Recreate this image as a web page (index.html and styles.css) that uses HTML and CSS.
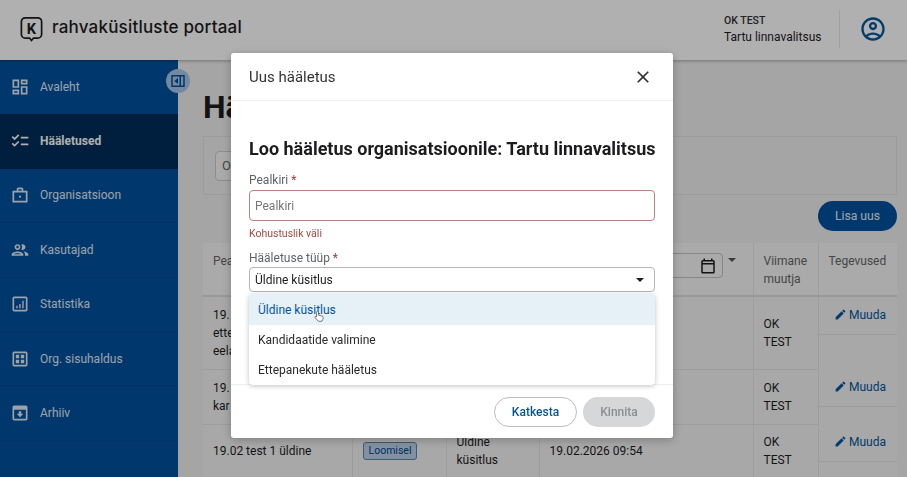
FILE: index.html
```html
<!DOCTYPE html>
<html lang="et">
<head>
<meta charset="utf-8">
<title>Rahvaküsitluste portaal</title>
<link rel="stylesheet" href="styles.css">
</head>
<body>
<div class="app">
  <header class="topbar">
    <div class="brand">
      <svg class="logo" viewBox="0 0 24 24" width="27" height="27"><path class="logo-line" d="M6.5 2.5h11a3.5 3.5 0 0 1 3.5 3.5v11a3.5 3.5 0 0 1-3.5 3.500h-3.700L12 22.700l-1.800-2.200H6.500a3.500 3.500 0 0 1-3.500-3.500V6a3.500 3.500 0 0 1 3.500-3.500z"/><text class="logo-k" x="12" y="16.700" text-anchor="middle">K</text></svg>
      <span class="brand-name">rahvaküsitluste portaal</span>
    </div>
    <div class="account">
      <div class="account-text"><div class="account-name">OK TEST</div><div class="account-org">Tartu linnavalitsus</div></div>
      <div class="account-icon"><svg viewBox="0 0 24 24" width="28" height="28"><path d="M12 2C6.480 2 2 6.480 2 12s4.480 10 10 10 10-4.480 10-10S17.520 2 12 2zM7.350 18.500C8.660 17.560 10.260 17 12 17s3.340.56 4.650 1.500C15.340 19.440 13.740 20 12 20s-3.340-.56-4.650-1.500zm10.790-1.380C16.450 15.800 14.320 15 12 15s-4.450.8-6.140 2.120C4.700 15.730 4 13.950 4 12c0-4.420 3.580-8 8-8s8 3.580 8 8c0 1.950-.7 3.730-1.860 5.120z"/><path d="M12 6c-1.930 0-3.500 1.570-3.500 3.500S10.070 13 12 13s3.500-1.570 3.500-3.500S13.930 6 12 6zm0 5c-.83 0-1.500-.67-1.500-1.500S11.170 8 12 8s1.500.67 1.500 1.500S12.830 11 12 11z"/></svg></div>
    </div>
  </header>
  <div class="shell">
    <nav class="sidebar">
      <button class="collapse" type="button"><svg viewBox="0 0 24 24" width="18" height="18"><path d="M3 4h18v16H3zm2 2v12h9V6zm11 0v12h3V6z" fill-rule="evenodd"/><path d="M12 8v8l-5-4z"/></svg></button>
      <a class="nav-item"><svg viewBox="0 0 24 24"><path d="M19 5v2h-4V5h4M9 5v6H5V5h4m10 8v6h-4v-6h4M9 17v2H5v-2h4M21 3h-8v6h8V3zM11 3H3v10h8V3zm10 8h-8v10h8V11zm-10 4H3v6h8v-6z"/></svg>Avaleht</a>
      <a class="nav-item active"><svg viewBox="0 0 24 24"><path d="M22 7h-9v2h9V7zm0 8h-9v2h9v-2zM5.540 11 2 7.460l1.410-1.410 2.120 2.120 4.240-4.240 1.410 1.410L5.540 11zm0 8L2 15.460l1.410-1.410 2.120 2.120 4.240-4.240 1.410 1.410L5.540 19z"/></svg>Hääletused</a>
      <a class="nav-item"><svg viewBox="0 0 24 24"><path fill-rule="evenodd" d="M3 7h5V4.500L9.500 3h5L16 4.500V7h5v14H3zm7-2v2h4V5zM5 9v10h14V9z"/><circle cx="12" cy="14" r="1.300"/></svg>Organisatsioon</a>
      <a class="nav-item wide-icon"><svg viewBox="0 0 24 24"><path d="M9 13.750c-2.340 0-7 1.170-7 3.500V19h14v-1.750c0-2.330-4.660-3.500-7-3.500zM4.340 17c.84-.58 2.870-1.250 4.660-1.250s3.820.67 4.660 1.250H4.340zM9 12c1.930 0 3.500-1.570 3.500-3.500S10.930 5 9 5 5.500 6.570 5.500 8.500 7.070 12 9 12zm0-5c.83 0 1.500.67 1.500 1.500S9.830 10 9 10s-1.500-.67-1.500-1.500S8.170 7 9 7zm7.040 6.810c1.160.84 1.960 1.960 1.960 3.440V19h4v-1.750c0-2.020-3.500-3.170-5.960-3.440zM15 12c1.930 0 3.500-1.570 3.500-3.500S16.930 5 15 5c-.54 0-1.040.13-1.500.35.63.89 1 1.980 1 3.150s-.37 2.260-1 3.150c.46.22.96.35 1.500.35z"/></svg>Kasutajad</a>
      <a class="nav-item"><svg viewBox="0 0 24 24"><path d="M19 3H5c-1.100 0-2 .9-2 2v14c0 1.100.9 2 2 2h14c1.100 0 2-.9 2-2V5c0-1.100-.9-2-2-2zm0 16H5V5h14v14z"/><path d="M7.500 14h1.700v3H7.500zm3.600-2h1.700v5h-1.700zm3.600-4h1.700v9h-1.700z"/></svg>Statistika</a>
      <a class="nav-item"><svg viewBox="0 0 24 24"><path d="M19 3H5c-1.100 0-2 .9-2 2v14c0 1.100.9 2 2 2h14c1.100 0 2-.9 2-2V5c0-1.100-.9-2-2-2zm0 16H5V5h14v14z"/><path d="M7 7h4v4H7zm6 0h4v4h-4zm-6 6h4v4H7zm6 0h4v4h-4z"/></svg>Org. sisuhaldus</a>
      <a class="nav-item"><svg viewBox="0 0 24 24"><path fill-rule="evenodd" d="M5 3h14a2 2 0 0 1 2 2v14a2 2 0 0 1-2 2H5a2 2 0 0 1-2-2V5a2 2 0 0 1 2-2zm0 5v11h14V8z"/><path d="M10.500 10h3v3H16l-4 4-4-4h2.500z"/></svg>Arhiiv</a>
    </nav>
    <main class="content">
      <h1 class="page-title">Hääletused</h1>
      <section class="filters"><div class="filter-input">O</div></section>
      <div class="toolbar"><button class="btn-primary" type="button">Lisa uus</button></div>
      <table class="grid">
        <colgroup><col class="c1"><col class="c2"><col class="c3"><col class="c4"><col class="c5"><col class="c6"></colgroup>
        <thead>
          <tr>
            <th>Pea</th><th></th><th></th>
            <th><div class="date-filter"><div class="date-input"><svg viewBox="0 0 24 24" width="18" height="18"><path d="M19 4h-1V2h-2v2H8V2H6v2H5a2 2 0 0 0-2 2v14a2 2 0 0 0 2 2h14a2 2 0 0 0 2-2V6a2 2 0 0 0-2-2zm0 16H5V10h14zM5 8V6h14v2z"/></svg></div><span class="caret"></span></div></th>
            <th>Viimane muutja</th><th>Tegevused</th>
          </tr>
        </thead>
        <tbody>
          <tr class="r1">
            <td>19.<br>ette<br>eela</td><td></td><td></td><td></td><td>OK TEST</td>
            <td class="actions"><a class="edit"><svg viewBox="0 0 24 24" width="13" height="13"><path d="M3 17.250V21h3.750L17.810 9.940l-3.750-3.750L3 17.250zM20.710 7.040a1 1 0 0 0 0-1.410l-2.340-2.340a1 1 0 0 0-1.410 0l-1.830 1.830 3.750 3.750 1.830-1.830z"/></svg>Muuda</a></td>
          </tr>
          <tr class="r2">
            <td>19.<br>kar</td><td></td><td></td><td></td><td>OK TEST</td>
            <td class="actions"><a class="edit"><svg viewBox="0 0 24 24" width="13" height="13"><path d="M3 17.250V21h3.750L17.810 9.940l-3.750-3.750L3 17.250zM20.710 7.040a1 1 0 0 0 0-1.410l-2.340-2.340a1 1 0 0 0-1.410 0l-1.830 1.830 3.750 3.750 1.830-1.830z"/></svg>Muuda</a></td>
          </tr>
          <tr class="r3">
            <td>19.02 test 1 üldine</td><td><span class="badge">Loomisel</span></td><td>Üldine küsitlus</td><td>19.02.2026 09:54</td><td>OK TEST</td>
            <td class="actions"><a class="edit"><svg viewBox="0 0 24 24" width="13" height="13"><path d="M3 17.250V21h3.750L17.810 9.940l-3.750-3.750L3 17.250zM20.710 7.040a1 1 0 0 0 0-1.410l-2.340-2.340a1 1 0 0 0-1.410 0l-1.830 1.830 3.750 3.750 1.830-1.830z"/></svg>Muuda</a></td>
          </tr>
        </tbody>
      </table>
    </main>
  </div>
</div>
<div class="backdrop"></div>
<div class="modal" role="dialog">
  <div class="modal-head">
    <span class="modal-title">Uus hääletus</span>
    <svg class="modal-close" viewBox="0 0 24 24" width="20" height="20"><path d="M19 6.410 17.590 5 12 10.590 6.410 5 5 6.410 10.590 12 5 17.590 6.410 19 12 13.410 17.590 19 19 17.590 13.410 12z"/></svg>
  </div>
  <div class="modal-body">
    <h2 class="modal-heading">Loo hääletus organisatsioonile: Tartu linnavalitsus</h2>
    <div class="field">
      <div class="field-label">Pealkiri <span class="req">*</span></div>
      <div class="text-input invalid">Pealkiri</div>
      <div class="field-error">Kohustuslik väli</div>
    </div>
    <div class="field field-select">
      <div class="field-label">Hääletuse tüüp <span class="req">*</span></div>
      <div class="select-box">Üldine küsitlus<span class="caret dark"></span></div>
      <ul class="menu">
        <li class="menu-item hover">Üldine küsitlus<svg class="pointer" viewBox="0 0 14 16" width="11" height="13"><path d="M4.500 1.200c.7 0 1.200.5 1.200 1.200v4l4.500 1c1 .2 1.500.9 1.500 1.800 0 1.700-.6 3.300-1.500 4.800H5.500L1.500 9.500c-.4-.5-.3-1.100.1-1.400.5-.3 1-.2 1.400.2l.3.3V2.400c0-.7.5-1.200 1.200-1.200z"/></svg></li>
        <li class="menu-item">Kandidaatide valimine</li>
        <li class="menu-item">Ettepanekute hääletus</li>
      </ul>
    </div>
  </div>
  <div class="modal-foot">
    <button class="btn-outline" type="button">Katkesta</button>
    <button class="btn-disabled" type="button" disabled>Kinnita</button>
  </div>
</div>
</body>
</html>
```
FILE: styles.css
```css
* { box-sizing: border-box; }
html, body { margin: 0; height: 100%; overflow: hidden; }
body { font-family: Roboto, "Liberation Sans", sans-serif; font-size: 12px; color: #1c1c1e; background: #efefef; }
.app { display: flex; flex-direction: column; height: 477px; overflow: hidden; }
.topbar { flex: 0 0 60px; display: flex; justify-content: space-between; align-items: center; background: #fff; padding: 0 15px 0 18px; box-shadow: 0 1px 3px rgba(0,0,0,.3); position: relative; z-index: 2; }
.brand { display: flex; align-items: center; gap: 7px; }
.logo { display: block; margin-bottom: 4px; }
.logo-line { fill: none; stroke: #1c1c1e; stroke-width: 1.500; }
.logo-k { font: 700 13px Roboto, sans-serif; fill: #1c1c1e; }
.brand-name { font-family: Inter, sans-serif; font-size: 17px; font-weight: 500; letter-spacing: .2px; color: #1c1c1e; margin-bottom: 7px; }
.account { display: flex; align-items: center; margin-bottom: 3px; }
.account-text { width: 115px; }
.account-name { font-size: 10.500px; font-weight: 500; line-height: 17px; color: #333; }
.account-org { font-size: 12px; line-height: 17px; color: #1c1c1e; }
.account-icon { height: 38px; border-left: 1px solid #e8e8e8; padding: 5px 5px 0 19px; }
.account-icon svg { fill: #00569f; display: block; }
.shell { flex: 1; display: flex; min-height: 0; }
.sidebar { flex: 0 0 178px; background: #00519f; position: relative; }
.collapse { position: absolute; right: -12px; top: 9px; width: 24px; height: 24px; border: 0; border-radius: 50%; padding: 3px; background: #a8c6e8; z-index: 3; }
.collapse svg { display: block; fill: #00519f; }
.nav-item { display: flex; align-items: center; height: 54.400px; padding: 0 0 0 10px; color: #e1ebf6; font-size: 12px; border-bottom: 1px solid rgba(0,0,0,.05); }
.nav-item svg { fill: #e1ebf6; width: 20px; height: 20px; margin-right: 10px; flex: none; }
.nav-item.active { background: #002c59; color: #fff; font-weight: 700; }
.nav-item.active svg { fill: #fff; }
.content { flex: 1; min-width: 0; padding: 28px 10px 0 25px; background: #efefef; }
.page-title { margin: 0; font-size: 32px; line-height: 38px; font-weight: 700; color: #1c1c1e; }
.filters { height: 59px; margin-top: 10px; padding: 14px 11px; border: 1px solid #e2e2e2; background: #f0f0f0; }
.filter-input { width: 300px; height: 30px; line-height: 28px; padding-left: 6px; border: 1px solid #ccc; border-radius: 4px; background: #f6f6f6; color: #666; font-size: 13px; }
.toolbar { display: flex; justify-content: flex-end; margin: 6px 0 12px; }
.btn-primary { width: 79px; height: 30px; border: 0; border-radius: 15px; background: #00519f; color: #e6eef7; font: 12.200px Roboto, sans-serif; }
.grid { width: 694px; table-layout: fixed; border-collapse: collapse; background: #f3f3f3; }
.c1 { width: 149px; } .c2 { width: 94px; } .c3 { width: 93px; } .c4 { width: 214px; } .c5 { width: 65px; } .c6 { width: 79px; }
.grid th { height: 53px; padding: 9px 10px 0; font-weight: 400; font-size: 12px; line-height: 18px; text-align: left; vertical-align: top; color: #666; background: #f7f7f7; border-right: 1px solid #e4e4e4; border-bottom: 2px solid #ddd; }
.grid th:last-child { border-right: 0; }
.grid td { padding: 0 10px; line-height: 18px; font-size: 12px; color: #1c1c1e; border-right: 1px solid #e4e4e4; border-bottom: 1px solid #e4e4e4; vertical-align: middle; }
.grid td:last-child { border-right: 0; }
.r1 td { height: 73px; } .r2 td { height: 55px; } .r3 td { height: 53px; }
.grid td.actions { padding: 0; vertical-align: top; border-bottom: 0; }
.edit { display: flex; align-items: center; justify-content: flex-end; gap: 2px; height: 38px; padding: 0 11px 2px 0; color: #00569f; font-size: 12px; border-bottom: 1px solid #e4e4e4; }
.edit svg { fill: #00569f; display: block; }
.badge { display: inline-block; padding: 0 5px; height: 18px; line-height: 16px; font-size: 10.500px; border: 1px solid #5b84ad; border-radius: 3px; background: #bcd3ea; color: #00468a; }
.date-filter { display: flex; align-items: flex-start; gap: 5px; margin-left: -10px; }
.date-input { width: 183px; height: 25px; margin-top: 1px; border: 1px solid #c4c4c4; border-radius: 4px; display: flex; align-items: center; justify-content: flex-end; padding-right: 5px; }
.date-input svg { fill: #1c1c1e; display: block; }
.caret { display: inline-block; width: 0; height: 0; border-left: 4px solid transparent; border-right: 4px solid transparent; border-top: 4px solid #555; margin-top: 6px; }
.backdrop { position: fixed; inset: 0; background: rgba(0,0,0,.31); z-index: 9; }
.modal { position: fixed; z-index: 10; left: 231px; top: 53px; width: 442px; height: 385px; background: #fff; border-radius: 3px; box-shadow: 0 2px 10px rgba(0,0,0,.25); display: flex; flex-direction: column; }
.modal-head { flex: 0 0 48px; display: flex; align-items: center; justify-content: space-between; padding: 0 20px 0 18px; border-bottom: 1px solid #eee; }
.modal-title { font-size: 15px; color: #333; }
.modal-close { fill: #333; display: block; }
.modal-body { flex: 1; padding: 37px 18px 0; }
.modal-heading { margin: 0 0 11px; font-size: 18px; line-height: 22px; font-weight: 700; color: #1c1c1e; white-space: nowrap; }
.field-label { font-size: 12px; line-height: 19px; color: #5f6368; }
.req { color: #a33a3a; }
.text-input { height: 31px; line-height: 30px; padding-left: 5px; border: 1px solid #b9837f; border-radius: 4px; color: #777; font-size: 12px; }
.field-error { font-size: 10.500px; line-height: 14px; margin-top: 6px; color: #a34a44; }
.field-select { position: relative; margin-top: 8px; }
.select-box { position: relative; height: 25px; line-height: 24px; padding-left: 5px; border: 1px solid #b5b5b5; border-radius: 4px; font-size: 12px; color: #1c1c1e; margin-top: -1px; }
.select-box .caret { position: absolute; right: 10px; top: 4px; border-top-color: #1c1c1e; }
.menu { position: absolute; left: 0; right: 0; top: 45px; margin: 0; padding: 0; list-style: none; background: #fff; border-radius: 4px; box-shadow: 0 1px 5px rgba(0,0,0,.25); z-index: 5; }
.menu-item { position: relative; height: 30px; line-height: 30px; padding-left: 9px; font-size: 12px; color: #2a2a2a; }
.menu-item.hover { height: 31px; line-height: 32px; background: #e6f0f7; color: #00569f; border-radius: 4px 4px 0 0; }
.pointer { position: absolute; left: 65px; top: 16px; fill: #fff; stroke: #555; stroke-width: 1; }
.modal-foot { flex: 0 0 54px; display: flex; justify-content: flex-end; align-items: flex-start; gap: 6px; padding: 12px 18px 0; border-top: 1px solid #eee; }
.btn-outline { width: 83px; height: 30px; border: 1px solid #bdbdbd; border-radius: 15px; background: #fff; color: #00569f; font: 500 12px Roboto, sans-serif; }
.btn-disabled { width: 72px; height: 30px; border: 0; border-radius: 15px; background: #d6d7d9; color: #8a8d91; font: 500 12px Roboto, sans-serif; }
```
